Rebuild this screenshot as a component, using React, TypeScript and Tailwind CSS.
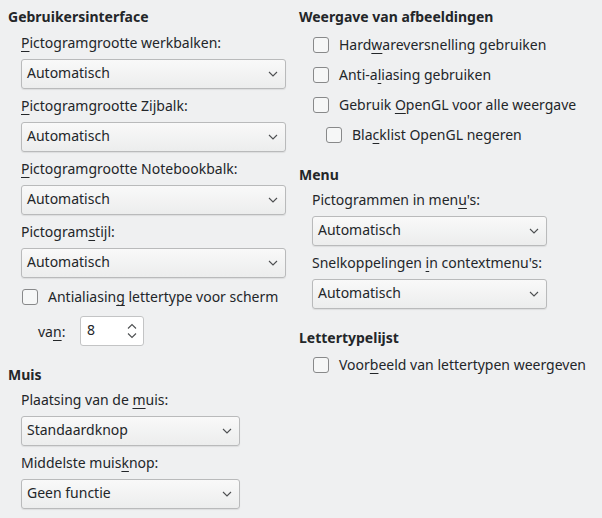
import type { ReactNode } from "react";

function M({ children }: { children: ReactNode }) {
  return <span className="underline decoration-1 underline-offset-[3px]">{children}</span>;
}

function Heading({ children, className = "" }: { children: ReactNode; className?: string }) {
  return <div className={`h-[18px] leading-[18px] font-bold ${className}`}>{children}</div>;
}

function Label({ children, className = "" }: { children: ReactNode; className?: string }) {
  return <div className={`h-[18px] leading-[18px] ${className}`}>{children}</div>;
}

function Chevron() {
  return (
    <svg width="10" height="6" viewBox="0 0 10 6" className="text-[#4d4f51]">
      <path d="M1 1 L5 5 L9 1" fill="none" stroke="currentColor" strokeWidth="1.1" />
    </svg>
  );
}

function Combo({ value, width, className = "" }: { value: string; width: string; className?: string }) {
  return (
    <div
      className={`flex h-[30px] ${width} items-center justify-between rounded-[3px] border border-[#b9babb] bg-gradient-to-b from-[#f9f9f9] to-[#eceded] pl-[5px] pr-[7px] shadow-[0_1px_1px_rgba(0,0,0,0.08)] ${className}`}
    >
      <span className="pb-[2px] leading-[18px]">{value}</span>
      <Chevron />
    </div>
  );
}

function Check({ children, className = "" }: { children: ReactNode; className?: string }) {
  return (
    <div className={`flex h-[22px] items-center gap-[10px] ${className}`}>
      <div className="h-4 w-4 rounded-[3px] border border-[#88898a] bg-[#f6f7f7]" />
      <span className="leading-[18px]">{children}</span>
    </div>
  );
}

function Spin({ value }: { value: string }) {
  return (
    <div className="flex h-[30px] w-16 items-center justify-between rounded-[3px] border border-[#c3c4c5] bg-white pl-[6px] pr-[6px]">
      <span className="pb-[2px] leading-[18px]">{value}</span>
      <svg width="10" height="16" viewBox="0 0 10 16" className="text-[#4d4f51]">
        <path d="M1 5.5 L5 1.5 L9 5.5" fill="none" stroke="currentColor" strokeWidth="1.1" />
        <path d="M1 10.5 L5 14.5 L9 10.5" fill="none" stroke="currentColor" strokeWidth="1.1" />
      </svg>
    </div>
  );
}

export default function App() {
  return (
    <div
      className="flex h-[518px] w-[602px] bg-[#eff0f1] px-2 pt-2 text-[14px] text-[#232629]"
      style={{ fontFamily: '"Noto Sans", "DejaVu Sans", sans-serif' }}
    >
      <div className="flex w-[291px] flex-col">
        <Heading>Gebruikersinterface</Heading>
        <div className="ml-[13px] flex flex-col">
          <Label className="mt-2"><M>P</M>ictogramgrootte werkbalken:</Label>
          <Combo className="mt-[7px]" width="w-[265px]" value="Automatisch" />
          <Label className="mt-2"><M>P</M>ictogramgrootte Zijbalk:</Label>
          <Combo className="mt-[7px]" width="w-[265px]" value="Automatisch" />
          <Label className="mt-2"><M>P</M>ictogramgrootte Notebookbalk:</Label>
          <Combo className="mt-[7px]" width="w-[265px]" value="Automatisch" />
          <Label className="mt-2">Pictogram<M>s</M>tijl:</Label>
          <Combo className="mt-[7px]" width="w-[265px]" value="Automatisch" />
          <Check className="mt-2 ml-px">Antialiasin<M>g</M> lettertype voor scherm</Check>
          <div className="mt-2 flex items-center">
            <span className="ml-[17px] w-[42px]">va<M>n</M>:</span>
            <Spin value="8" />
          </div>
        </div>
        <Heading className="mt-5">Muis</Heading>
        <div className="ml-[13px] flex flex-col">
          <Label className="mt-[7px]">Plaatsing van de <M>m</M>uis:</Label>
          <Combo className="mt-[7px]" width="w-[219px]" value="Standaardknop" />
          <Label className="mt-2">Middelste muis<M>k</M>nop:</Label>
          <Combo className="mt-[7px]" width="w-[219px]" value="Geen functie" />
        </div>
      </div>

      <div className="flex flex-1 flex-col">
        <Heading>Weergave van afbeeldingen</Heading>
        <div className="ml-[14px] flex flex-col gap-2 pt-2">
          <Check>Hard<M>w</M>areversnelling gebruiken</Check>
          <Check>Anti-a<M>l</M>iasing gebruiken</Check>
          <Check>Gebruik <M>O</M>penGL voor alle weergave</Check>
          <Check className="ml-[13px]">Bla<M>c</M>klist OpenGL negeren</Check>
        </div>
        <Heading className="mt-5">Menu</Heading>
        <div className="ml-[13px] flex flex-col">
          <Label className="mt-[7px]">Pictogrammen in men<M>u</M>'s:</Label>
          <Combo className="mt-[7px]" width="w-[235px]" value="Automatisch" />
          <Label className="mt-2">Snelkoppelingen <M>i</M>n contextmenu's:</Label>
          <Combo className="mt-[7px]" width="w-[235px]" value="Automatisch" />
        </div>
        <Heading className="mt-5">Lettertypelijst</Heading>
        <div className="ml-[14px] flex flex-col pt-[7px]">
          <Check>Voor<M>b</M>eeld van lettertypen weergeven</Check>
        </div>
      </div>
    </div>
  );
}
